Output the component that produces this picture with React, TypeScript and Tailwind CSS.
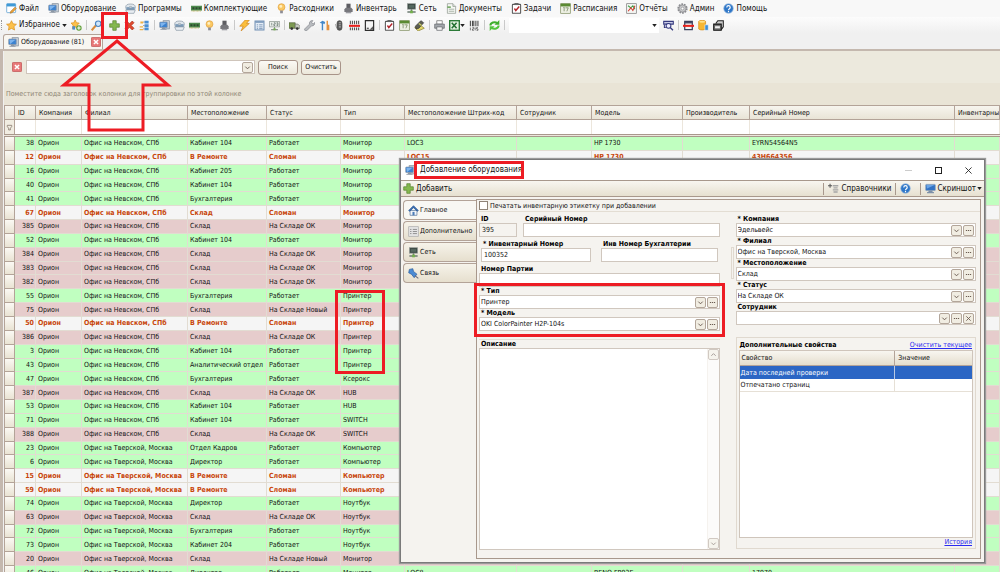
import type { ReactNode } from "react";

const monitor = (
  <>
    <rect x="6" y="1" width="9" height="12" fill="#c9d0d8" stroke="#7f8b98" />
    <rect x="1" y="3" width="11" height="8" rx="1" fill="#3b82d0" stroke="#8795a5" />
    <path d="M2 4h9L3 10z" fill="#7db4ee" />
    <path d="M4 11h5v2h2v1H2v-1h2z" fill="#8d98a5" />
  </>
);

const task = (
  <>
    <rect x="2" y="2" width="12" height="13" rx="1" fill="#fff" stroke="#555" strokeWidth="1.5" />
    <rect x="5" y="0" width="6" height="3" fill="#666" />
    <path d="M5 8l2 3 5-6" fill="none" stroke="#b2232a" strokeWidth="2" />
  </>
);

const calendar = (
  <>
    <rect x="1" y="1" width="14" height="14" fill="#eef0e4" stroke="#7c8a5a" />
    <rect x="1" y="1" width="14" height="4" fill="#5b8a32" />
    <path d="M5 7l1-1v6M8 7h4l-2 5" fill="none" stroke="#64784a" />
  </>
);

const paths: Record<string, ReactNode> = {
  monitor,
  task,
  calendar,
  file: (
    <>
      <rect x="1" y="1" width="13" height="13" rx="1" fill="#fff" stroke="#4a94cc" />
      <rect x="1" y="1" width="13" height="4" fill="#3f9ad6" />
      <path d="M7 12l6-6 2 2-6 6-3 1z" fill="#e8a23c" stroke="#a5661c" strokeWidth=".7" />
    </>
  ),
  disc: (
    <>
      <ellipse cx="8" cy="6" rx="7" ry="4.500" fill="#dfe6ec" stroke="#8996a3" />
      <rect x="2" y="6" width="12" height="5" fill="#7c9bb8" />
      <path d="M1 10h14l-2 5H3z" fill="#e8edf2" stroke="#8996a3" />
      <ellipse cx="8" cy="6" rx="2" ry="1" fill="#fff" stroke="#8996a3" />
    </>
  ),
  ram: (
    <>
      <rect x="0" y="4" width="16" height="7" fill="#4e8a4e" />
      <path d="M2 6h3v3H2zM6.500 6h3v3h-3zM11 6h3v3h-3z" fill="#2d4a2d" />
      <path d="M1 11.500h14" stroke="#b9a544" strokeWidth="1.500" strokeDasharray="1 1" />
    </>
  ),
  bulb: (
    <>
      <circle cx="8" cy="6" r="5" fill="#fbc964" stroke="#e0a03e" />
      <circle cx="7" cy="5" r="2" fill="#fff0c2" />
      <path d="M6 11h4v4H6z" fill="#8d8d95" />
    </>
  ),
  device: (
    <>
      <path d="M5 1h6v7H5z" fill="#5d5d62" />
      <path d="M2 9l2-2h8l2 2v4H2z" fill="#77777c" />
      <path d="M4 13h8v2H4z" fill="#9a9aa0" />
    </>
  ),
  net: (
    <>
      <rect x="2" y="1" width="12" height="8" fill="#3d4a45" stroke="#9aa09c" />
      <path d="M4 3h8v4H4z" fill="#55685f" />
      <path d="M8 9v3M2 13h12" stroke="#6b7a70" strokeWidth="2" />
      <rect x="6" y="11" width="4" height="4" fill="#74b04c" />
    </>
  ),
  docs: (
    <>
      <path d="M2 1h8l4 4v10H2z" fill="#f6f8f4" stroke="#8b938a" />
      <path d="M10 1v4h4" fill="#dfe5dc" stroke="#8b938a" />
      <path d="M2 6h5" stroke="#5c9a49" strokeWidth="2" />
      <path d="M4 9h8M4 12h8" stroke="#9aa69a" strokeWidth="1.200" />
    </>
  ),
  report: (
    <>
      <rect x="1" y="1" width="14" height="14" fill="#f4f6f3" stroke="#777" />
      <path d="M3 4l4 3 3-3 3 5" fill="none" stroke="#3b9b43" strokeWidth="1.500" />
      <path d="M3 12l4-5 3 4 3-7" fill="none" stroke="#d33b30" strokeWidth="1.500" />
    </>
  ),
  gear: (
    <>
      <circle cx="8" cy="8" r="6" fill="#b9babd" stroke="#8b8c90" strokeWidth="3" strokeDasharray="2.400 1.300" />
      <circle cx="8" cy="8" r="5" fill="#c9cacc" stroke="#919295" />
      <circle cx="8" cy="8" r="2" fill="#fff" stroke="#919295" />
    </>
  ),
  help: (
    <>
      <circle cx="8" cy="8" r="7" fill="#2f77c8" stroke="#a6c2e0" />
      <path d="M5.500 6.500c0-3.500 5-3.500 5 0 0 2-2.500 1.500-2.500 4M8 11.500v2" fill="none" stroke="#fff" strokeWidth="1.700" />
    </>
  ),
  star: <path d="M8 1l2.200 4.600 5 .6-3.700 3.400 1 5L8 12.200 3.500 14.600l1-5L.8 6.200l5-.6z" fill="#fcc14a" stroke="#d98f1f" />,
  starAdd: (
    <>
      <path d="M6 0l2 4 4 .5-3 3 1 5L6 10l-4 2.500 1-5L0 4.500 4 4z" fill="#fcc14a" stroke="#d98f1f" />
      <path d="M2 9h4v5H2z" fill="#4c8bcb" />
      <circle cx="11.500" cy="11.500" r="4" fill="#62a03a" />
      <path d="M11.500 9v5M9 11.500h5" stroke="#fff" strokeWidth="1.500" />
    </>
  ),
  search: (
    <>
      <path d="M1 15l6-7" stroke="#d98c3b" strokeWidth="3" />
      <circle cx="10.500" cy="5.500" r="4" fill="#cfe6fb" stroke="#4b86c2" strokeWidth="1.700" />
    </>
  ),
  plus: <path d="M5.500 1h5v4.500H15v5h-4.500V15h-5v-4.500H1v-5h4.500z" fill="#85b84f" stroke="#54802d" />,
  remove: <path d="M1.500 4L4 1.500l4 4 4-4L14.500 4l-4 4 4 4-2.500 2.500-4-4-4 4L1.500 12l4-4z" fill="#e0492e" stroke="#a82c18" />,
  list: (
    <>
      <path d="M1 9h5v2H1zM1 13h5v2H1zM2 2h4v3H2z" fill="#f0b244" />
      <path d="M8 1h6v4H8zM8 6h6v4H8zM8 11h6v4H8z" fill="#4a90d4" />
      <path d="M6 3h2M6 8h2M6 13h2" stroke="#777" />
    </>
  ),
  bolt: <path d="M9 0h6l-4 5h4L3 16l3-7H1z" fill="#fbbe3c" stroke="#cf8420" />,
  sheet: (
    <>
      <rect x="1.500" y="1.500" width="13" height="13" fill="#e5edf6" stroke="#6f8fb4" strokeWidth="1.500" />
      <path d="M2 3h12" stroke="#6f8fb4" strokeWidth="2" />
      <path d="M4 7h2M4 10h2M4 12.500h2M7.500 7h5M7.500 10h5M7.500 12.500h5" stroke="#5b7ba2" />
    </>
  ),
  netId: (
    <>
      <rect x="1" y="2" width="14" height="8" fill="#eef2ee" stroke="#8a948d" />
      <path d="M4 4v4M7 4h2v2H7v2h2M11 4h2v4h-2M11 6h2" fill="none" stroke="#5b6b62" />
      <path d="M8 10v3M3 14h10" stroke="#8a948d" strokeWidth="1.500" />
      <rect x="6.500" y="12" width="3" height="3" fill="#74b04c" />
    </>
  ),
  truck: (
    <>
      <path d="M0 4h9v8H0z" fill="#7d9a52" stroke="#56633f" />
      <path d="M9 6h4l3 3v3H9z" fill="#c6c9c0" stroke="#6e7268" />
      <circle cx="4" cy="12.500" r="2" fill="#333" />
      <circle cx="12" cy="12.500" r="2" fill="#333" />
    </>
  ),
  wrench: <path d="M1 13l7-7c-1-3 2-6 5-5l-2 2 1 2 2 .5 1.500-2c1 3-2 5.500-4.500 5l-7 7c-2 1-4-1-3-2.500z" fill="#b9bcc0" stroke="#85888d" />,
  tools: (
    <>
      <path d="M1 4l4-3 4 2-1 3-2-1v10H4V5z" fill="#4588c9" />
      <path d="M11 1h2v6h2v8h-4V7z" fill="#e5913d" />
    </>
  ),
  traffic: (
    <>
      <rect x="4.500" y="1" width="7" height="14" rx="3.500" fill="#595959" stroke="#3d3d3d" />
      <path d="M7 4h3M7 7h3M7 10h3" stroke="#aaa" strokeWidth="1.500" />
      <path d="M4 12L2 6" stroke="#888" />
    </>
  ),
  barScan: (
    <>
      <path d="M2 1v5M5 1v5M8 1v5M11 1v5M14 1v5M2 11v4M5 11v4M8 11v4M11 11v4M14 11v4" stroke="#555" strokeWidth="1.600" />
      <path d="M0 8.500h16" stroke="#e8201c" strokeWidth="3" />
    </>
  ),
  docScan: (
    <>
      <path d="M2 1h12v14H2z" fill="#f5f5f5" stroke="#2e2e2e" strokeWidth="1.700" />
      <path d="M8 14l5-5v5z" fill="#555" />
      <path d="M4 12h3" stroke="#333" strokeWidth="1.500" />
    </>
  ),
  edit: (
    <>
      <path d="M1 11l9-3 5 4-9 4z" fill="#e2d76a" stroke="#877d36" />
      <path d="M2 9l8-8 4 3-7 8-4 1z" fill="#5d5f52" stroke="#333" />
      <path d="M7 5l4 3" stroke="#c9cc62" strokeWidth="2" />
    </>
  ),
  printer: (
    <>
      <path d="M4 1h8v5H4z" fill="#fff" stroke="#666" />
      <path d="M1 6h14v6H1z" fill="#a4a8ad" stroke="#5d6166" />
      <path d="M4 10h8v5H4z" fill="#f3f3f3" stroke="#5d6166" />
    </>
  ),
  excel: (
    <>
      <rect x="1" y="1" width="14" height="14" fill="#e3f1e0" stroke="#2b7a38" strokeWidth="2" />
      <path d="M4 4l7 8M11 4l-7 8" stroke="#227031" strokeWidth="2.200" />
    </>
  ),
  barcode: (
    <>
      <path d="M2 1v8M5 1v8M7 1v8M10 1v8M13 1v8" stroke="#444" strokeWidth="1.500" />
      <path d="M2 11v4M5 11h2v2H5v2h2M9 11v4M13 11h-2v2h2v2h-2" fill="none" stroke="#444" />
    </>
  ),
  refresh: (
    <>
      <path d="M2 8a6 5 0 0 1 10-3.500" fill="none" stroke="#3fae2c" strokeWidth="3" />
      <path d="M15 0v7H8z" fill="#3fae2c" />
      <path d="M14 8a6 5 0 0 1-10 3.500" fill="none" stroke="#52c43c" strokeWidth="3" />
      <path d="M1 16V9h7z" fill="#52c43c" />
    </>
  ),
  findScan: (
    <>
      <path d="M1 2h14v4H1z" fill="#c8cbe6" stroke="#34397e" strokeWidth="1.500" />
      <circle cx="8" cy="8.500" r="3.500" fill="#eef" stroke="#34397e" strokeWidth="1.500" />
      <path d="M10.500 11l4 4" stroke="#34397e" strokeWidth="2" />
      <path d="M2 7v4h2" fill="none" stroke="#34397e" strokeWidth="1.500" />
    </>
  ),
  boxScan: (
    <>
      <rect x="2.500" y="2" width="11" height="12" fill="#f3f3f3" stroke="#3a3f5c" strokeWidth="1.800" />
      <path d="M3 4h10" stroke="#3a3f5c" strokeWidth="2" />
      <path d="M0 8.500h16" stroke="#e8201c" strokeWidth="3" />
    </>
  ),
  base: (
    <>
      <path d="M1 2c2-2 8-2 10 0v11c-2 2-8 2-10 0z" fill="#f7b733" stroke="#d68a16" />
      <ellipse cx="6" cy="2.500" rx="4.500" ry="1.500" fill="#ffe08a" />
      <path d="M10 7h5v8h-5z" fill="#3e8ed6" stroke="#fff" strokeWidth=".8" />
    </>
  ),
  blackPrinter: (
    <>
      <path d="M4 5l3-4h8v9l-3 4" fill="#ccc" stroke="#222" strokeWidth="1.500" />
      <path d="M1 6h11v9H1z" fill="#777" stroke="#111" strokeWidth="1.500" />
      <path d="M3 9h7v3H3z" fill="#eee" />
    </>
  ),
  home: (
    <>
      <path d="M3 8h10v7H3z" fill="#f3f6fa" stroke="#53739c" />
      <path d="M8 1l7 7-1.500 1L8 4 2.500 9 1 8z" fill="#3870b8" stroke="#27528c" />
      <path d="M6.500 10h3v5h-3z" fill="#4b7cb8" />
    </>
  ),
  form: (
    <>
      <rect x="1" y="1" width="14" height="14" fill="#e4e4e4" stroke="#aaa" />
      <path d="M3 5h2M3 8h2M3 11h2M7 5h6M7 8h6M7 11h6" stroke="#888" strokeWidth="1.300" />
    </>
  ),
  pin: (
    <>
      <path d="M2 2l5-1 1 4 5 4-4 5-4-5-4-2z" fill="#4b8bd4" stroke="#2a5c9c" />
      <path d="M10 11l5 4" stroke="#667" strokeWidth="1.500" />
    </>
  ),
  refs: (
    <>
      <path d="M3 1v6M0 4h6" stroke="#555" strokeWidth="1.500" />
      <path d="M7 4h8M8 7h6M7 10h8M8 13h6" stroke="#a5a5a5" strokeWidth="2" />
    </>
  ),
  screen: (
    <>
      <rect x="1" y="2" width="14" height="9" rx="1" fill="#3373c4" stroke="#8ba0b8" />
      <path d="M2 3h12L3 8z" fill="#6ba4e6" />
      <path d="M5 11h6v2h2v2H3v-2h2z" fill="#7d90a8" />
    </>
  ),
};

const Icon = ({ name }: { name: string }) => (
  <svg viewBox="0 0 16 16" className="h-[11px] w-[11px] shrink-0" aria-hidden="true">
    {paths[name]}
  </svg>
);

const Caret = () => (
  <svg viewBox="0 0 6 4" className="h-[3px] w-[5px] shrink-0" aria-hidden="true">
    <path d="M0 0h6L3 4z" fill="#222" />
  </svg>
);

const menu = [
  ["file", "Файл"],
  ["monitor", "Оборудование"],
  ["disc", "Программы"],
  ["ram", "Комплектующие"],
  ["bulb", "Расходники"],
  ["device", "Инвентарь"],
  ["net", "Сеть"],
  ["docs", "Документы"],
  ["task", "Задачи"],
  ["calendar", "Расписания"],
  ["report", "Отчёты"],
  ["gear", "Админ"],
  ["help", "Помощь"],
];

const MenuBar = () => (
  <nav className="flex h-[17px] shrink-0 items-center gap-[9px] bg-[#f8f8f8] pl-[6px] text-[8px] leading-[10px]">
    {menu.map(([icon, label]) => (
      <button key={label} type="button" className="flex shrink-0 items-center gap-[2px]">
        <Icon name={icon} />
        {label}
      </button>
    ))}
  </nav>
);

const Sep = () => <span className="h-[10px] w-px shrink-0 bg-[#c9c9c9]" />;

const toolGroups = [
  ["monitor", "disc", "ram", "bulb", "device"],
  ["bolt", "sheet", "netId"],
  ["truck", "wrench", "tools", "traffic", "barScan", "docScan"],
  ["task", "calendar", "edit"],
];

const ToolButton = ({ icon }: { icon: string }) => (
  <button type="button" aria-label={icon} className="flex shrink-0 items-center">
    <Icon name={icon} />
  </button>
);

const ToolBar = () => (
  <div className="flex h-4 shrink-0 items-center gap-1 bg-gradient-to-b from-[#fcfcfc] to-[#f0f0f0] pl-[1px] text-[8px] leading-[10px]">
    <span className="h-[10px] w-px shrink-0 border-l border-dotted border-[#999]" />
    <button type="button" className="flex shrink-0 items-center gap-[2px]">
      <Icon name="star" />
      Избранное
      <Caret />
    </button>
    <ToolButton icon="starAdd" />
    <Sep />
    <ToolButton icon="search" />
    <span className="relative ml-[3px] flex shrink-0">
      <ToolButton icon="plus" />
      <span className="absolute -inset-2 border-[3px] border-[#ed1c24]" />
    </span>
    <ToolButton icon="remove" />
    <ToolButton icon="list" />
    {toolGroups.map((group) => (
      <div key={group[0]} className="flex shrink-0 items-center gap-1">
        <Sep />
        {group.map((icon) => (
          <ToolButton key={icon} icon={icon} />
        ))}
      </div>
    ))}
    <Sep />
    <ToolButton icon="printer" />
    <button type="button" aria-label="Excel" className="flex shrink-0 items-center">
      <Icon name="excel" />
      <Caret />
    </button>
    <ToolButton icon="barcode" />
    <Sep />
    <ToolButton icon="refresh" />
    <Sep />
    <div className="flex h-[15px] w-[150px] shrink-0 items-center bg-white pr-[2px]">
      <input aria-label="Быстрый поиск" className="h-full min-w-0 flex-1 bg-white outline-none" />
      <Caret />
    </div>
    <ToolButton icon="findScan" />
    <Sep />
    <ToolButton icon="boxScan" />
    <ToolButton icon="base" />
    <ToolButton icon="blackPrinter" />
  </div>
);

const CloseX = () => (
  <svg viewBox="0 0 12 12" className="h-[10px] w-[10px] shrink-0" aria-hidden="true">
    <rect x=".5" y=".5" width="11" height="11" rx="1" fill="#e87878" stroke="#c25a5a" />
    <path d="M3.500 3.500l5 5M8.500 3.500l-5 5" stroke="#fff" strokeWidth="1.800" />
  </svg>
);

const Chevron = ({ up }: { up?: boolean }) => (
  <svg viewBox="0 0 8 8" className="h-[7px] w-[7px]" aria-hidden="true">
    <path d={up ? "M1.500 5.500L4 3l2.500 2.500" : "M1.500 3L4 5.500 6.500 3"} fill="none" stroke="#6b5d52" strokeWidth="1.100" />
  </svg>
);

const SmallButton = ({ label, children }: { label: string; children: ReactNode }) => (
  <button
    type="button"
    aria-label={label}
    className="flex h-[11px] w-[11px] shrink-0 items-center justify-center rounded-[2px] border border-[#b3a69a] bg-[#f1ede2]"
  >
    {children}
  </button>
);

const Dots = () => (
  <svg viewBox="0 0 8 8" className="h-[7px] w-[7px]" aria-hidden="true">
    <path d="M1 4h1.400M3.300 4h1.400M5.600 4H7" stroke="#6b5d52" strokeWidth="1.300" />
  </svg>
);

const SearchBar = () => (
  <div className="flex h-8 shrink-0 items-center gap-[3px] bg-[#ece9dd] pl-[8px]">
    <button type="button" aria-label="Закрыть поиск" className="flex">
      <CloseX />
    </button>
    <div className="ml-px flex h-[14px] w-[229px] items-center border border-[#cfc5bb] bg-white pr-px">
      <input aria-label="Строка поиска" className="h-full min-w-0 flex-1 outline-none" />
      <SmallButton label="Открыть список">
        <Chevron />
      </SmallButton>
    </div>
    <button type="button" className="h-[15px] w-10 rounded-[3px] border border-[#a89489] bg-gradient-to-b from-[#fbfaf5] to-[#ece7da]">
      Поиск
    </button>
    <button type="button" className="h-[15px] w-[40px] rounded-[3px] border border-[#a89489] bg-gradient-to-b from-[#fbfaf5] to-[#ece7da]">
      Очистить
    </button>
  </div>
);

const columns = [
  "ID",
  "Компания",
  "Филиал",
  "Местоположение",
  "Статус",
  "Тип",
  "Местоположение Штрих-код",
  "Сотрудник",
  "Модель",
  "Производитель",
  "Серийный Номер",
  "Инвентарный Номер",
];

const spb = "Офис на Невском, СПб";
const msk = "Офис на Тверской, Москва";

const rows: string[][] = [
  ["38", spb, "Кабинет 104", "Работает", "Монитор", "LOC3", "HP 1730", "EYRN54564N5"],
  ["12", spb, "В Ремонте", "Сломан", "Монитор", "LOC15", "HP 1730", "43H664356"],
  ["16", spb, "Кабинет 205", "Работает", "Монитор"],
  ["40", spb, "Кабинет 104", "Работает", "Монитор"],
  ["41", spb, "Бухгалтерия", "Работает", "Монитор"],
  ["67", spb, "Склад", "Сломан", "Монитор"],
  ["385", spb, "Склад", "На Складе ОК", "Монитор"],
  ["52", spb, "Кабинет 104", "Работает", "Монитор"],
  ["384", spb, "Склад", "На Складе ОК", "Монитор"],
  ["383", spb, "Склад", "На Складе ОК", "Монитор"],
  ["382", spb, "Склад", "На Складе ОК", "Монитор"],
  ["55", spb, "Бухгалтерия", "Работает", "Принтер"],
  ["75", spb, "Склад", "На Складе Новый", "Принтер"],
  ["50", spb, "В Ремонте", "Сломан", "Принтер"],
  ["386", spb, "Склад", "На Складе ОК", "Принтер"],
  ["3", spb, "Кабинет 104", "Работает", "Принтер"],
  ["43", spb, "Аналитический отдел", "Работает", "Принтер"],
  ["47", spb, "Бухгалтерия", "Работает", "Ксерокс"],
  ["387", spb, "Склад", "На Складе ОК", "HUB"],
  ["53", spb, "Кабинет 104", "Работает", "HUB"],
  ["71", spb, "Кабинет 104", "Работает", "SWITCH"],
  ["388", spb, "Склад", "На Складе ОК", "SWITCH"],
  ["23", msk, "Отдел Кадров", "Работает", "Компьютер"],
  ["6", msk, "Директор", "Работает", "Компьютер"],
  ["15", msk, "В Ремонте", "Сломан", "Компьютер"],
  ["59", msk, "В Ремонте", "Сломан", "Компьютер"],
  ["74", msk, "Директор", "Работает", "Ноутбук"],
  ["63", msk, "Склад", "На Складе ОК", "Ноутбук"],
  ["72", msk, "Бухгалтерия", "Работает", "Ноутбук"],
  ["73", msk, "Кабинет 204", "Работает", "Ноутбук"],
  ["20", msk, "Склад", "На Складе Новый", "Монитор"],
  ["46", msk, "Директор", "Работает", "Монитор", "LOC8", "BENQ FP93E", "17970"],
];

const rowStyle = (status: string) => {
  if (status === "Работает") return "bg-[#c0ffc0]";
  if (status === "Сломан") return "bg-[#f5f5f5] font-bold text-[#c8460a]";
  return "bg-[#e6cccc]";
};

const EquipmentTable = () => (
  <table className="h-[475px] w-full table-fixed border-separate border-spacing-0 bg-white leading-[10px]">
    <colgroup>
      <col className="w-[11px]" />
      <col className="w-[21px]" />
      <col className="w-[46px]" />
      <col className="w-[106px]" />
      <col className="w-[79px]" />
      <col className="w-[74px]" />
      <col className="w-[64px]" />
      <col className="w-[112px]" />
      <col className="w-[75px]" />
      <col className="w-[91px]" />
      <col className="w-[67px]" />
      <col className="w-[205px]" />
      <col />
    </colgroup>
    <thead>
      <tr className="h-[15px] bg-gradient-to-b from-[#f8f6f0] to-[#e8e3d5]">
        <th className="border border-[#b3a398] p-0" />
        {columns.map((name) => (
          <th
            key={name}
            className="overflow-hidden border-y border-r border-[#b3a398] p-0 pl-[3px] text-left font-normal whitespace-nowrap"
          >
            {name}
          </th>
        ))}
      </tr>
      <tr className="h-[14px]">
        <td className="border-x border-[#b3a398] bg-[#f1ede2] p-0">
          <svg viewBox="0 0 8 8" className="mx-auto h-[7px] w-[7px]" aria-hidden="true">
            <path d="M1.500 1.500h5v1.500L5 4.800v2H3v-2L1.500 3z" fill="none" stroke="#84776b" strokeWidth=".9" />
          </svg>
        </td>
        {columns.map((name) => (
          <td key={name} className="border-r border-[#ece6dc] p-0" />
        ))}
      </tr>
      <tr className="h-[3px]">
        <td colSpan={13} className="h-[3px] border-y border-[#a8988c] bg-[#ece6dc] p-0" />
      </tr>
    </thead>
    <tbody>
      {rows.map(([id, branch, place, status, type, code, model, serial]) => (
        <tr key={id} className={rowStyle(status)}>
          <td className="border border-t-0 border-[#b3a398] bg-gradient-to-b from-[#fbf9f4] to-[#e9e3d3] p-0" />
          <td className="border-r border-b border-[#e2dcd2] p-0 pr-px text-right">{id}</td>
          {["Орион", branch, place, status, type, code, "", model, "", serial, ""].map((text, i) => (
            <td key={i} className="overflow-hidden border-r border-b border-[#e2dcd2] p-0 pl-[2px] whitespace-nowrap">
              {text}
            </td>
          ))}
        </tr>
      ))}
    </tbody>
  </table>
);

const inputStyle = "h-[14px] w-full border border-[#d0c7be] px-[2px] outline-none";

type FieldProps = { id: string; label: string; value?: string; className?: string; disabled?: boolean };

const TextField = ({ id, label, value = "", className = "", disabled }: FieldProps) => (
  <div className={`flex flex-col ${className}`}>
    <label htmlFor={id} className="pl-[2px] font-bold whitespace-nowrap text-black">
      {label}
    </label>
    <input id={id} defaultValue={value} readOnly={disabled} className={`${inputStyle} ${disabled ? "bg-[#f5f3ef]" : "bg-white"}`} />
  </div>
);

const SelectField = ({ id, label, value = "", clear }: FieldProps & { clear?: boolean }) => (
  <div className="flex flex-col">
    <label htmlFor={id} className="pl-[2px] font-bold whitespace-nowrap text-black">
      {label}
    </label>
    <div className="flex h-[14px] items-center gap-px border border-[#d0c7be] bg-white pr-px">
      <select id={id} defaultValue={value} className="h-full min-w-0 flex-1 appearance-none bg-white pl-px outline-none">
        <option>{value}</option>
      </select>
      <SmallButton label="Открыть список">
        <Chevron />
      </SmallButton>
      <SmallButton label="Выбрать">
        <Dots />
      </SmallButton>
      {clear && (
        <SmallButton label="Очистить">
          <svg viewBox="0 0 8 8" className="h-[7px] w-[7px]" aria-hidden="true">
            <path d="M1.500 1.500l5 5M6.500 1.500l-5 5" stroke="#6b5d52" />
          </svg>
        </SmallButton>
      )}
    </div>
  </div>
);

const tabs = [
  ["home", "Главное"],
  ["form", "Дополнительно"],
  ["net", "Сеть"],
  ["pin", "Связь"],
];

const DialogTabs = () => (
  <div role="tablist" className="flex w-[73px] shrink-0 flex-col gap-px pt-[3px]">
    {tabs.map(([icon, label], i) => (
      <button
        key={label}
        type="button"
        role="tab"
        aria-selected={i === 0}
        className={`flex h-5 items-center gap-px rounded-l-[4px] border border-r-0 border-[#b3a398] pl-[4px] ${
          i === 0 ? "bg-[#f8f7f3]" : "bg-gradient-to-b from-[#f6f3ea] to-[#e6dfce]"
        }`}
      >
        <Icon name={icon} />
        {label}
      </button>
    ))}
  </div>
);

const Description = () => (
  <div className="flex min-h-0 flex-1 flex-col">
    <label htmlFor="description" className="pl-[2px] font-bold text-black">
      Описание
    </label>
    <div className="flex flex-1 border border-[#d0c7be] bg-white">
      <textarea id="description" className="min-w-0 flex-1 resize-none outline-none" />
      <div className="flex w-3 flex-col justify-between border-l border-[#efebe4] bg-[#fbfaf8] opacity-60">
        <SmallButton label="Вверх">
          <Chevron up />
        </SmallButton>
        <SmallButton label="Вниз">
          <Chevron />
        </SmallButton>
      </div>
    </div>
  </div>
);

const Properties = () => (
  <div className="flex min-h-0 flex-1 flex-col border border-[#e0d9cf] p-[2px] pb-0">
    <div className="flex h-[10px] items-center justify-between px-px">
      <span className="font-bold text-black">Дополнительные свойства</span>
      <a href="#clear" className="text-[#2a2af0] underline">
        Очистить текущее
      </a>
    </div>
    <div className="flex-1 border border-[#cfc5bb] bg-white">
      <table className="w-full table-fixed border-separate border-spacing-0">
        <thead>
          <tr className="h-[15px] bg-gradient-to-b from-[#f8f6f0] to-[#e3dccb]">
            <th className="w-[67%] border-r border-b border-[#b3a398] p-0 pl-[2px] text-left font-normal">Свойство</th>
            <th className="border-b border-[#b3a398] p-0 pl-[3px] text-left font-normal">Значение</th>
          </tr>
        </thead>
        <tbody>
          <tr className="h-[13px] bg-[#2b66c4] text-white">
            <td className="border-r border-[#b9c9e4] p-0 pl-px">Дата последней проверки</td>
            <td className="p-0" />
          </tr>
          <tr className="h-[13px]">
            <td className="border-r border-b border-[#e6e0d6] p-0 pl-px">Отпечатано страниц</td>
            <td className="border-b border-[#e6e0d6] p-0" />
          </tr>
        </tbody>
      </table>
    </div>
    <a href="#history" className="h-[10px] self-end pr-px text-[#2a2af0] underline">
      История
    </a>
  </div>
);

const DialogForm = () => (
  <div className="mt-[2px] mr-px mb-[3px] flex min-w-0 flex-1 flex-col border border-[#a8988c] bg-[#f5f3ef]">
    <div className="flex h-3 shrink-0 items-center gap-[2px] border-b border-[#e3ddd3] pl-[2px]">
      <input id="print-label" type="checkbox" className="h-[9px] w-[9px] appearance-none border border-[#8f8478] bg-white" />
      <label htmlFor="print-label">Печатать инвентарную этикетку при добавлении</label>
    </div>
    <div className="flex min-h-0 flex-1 pr-1 pl-[2px]">
      <div className="flex flex-1 flex-col pt-[3px] pb-2">
        <div className="flex gap-[6px]">
          <TextField id="item-id" label="ID" value="395" className="w-[38px]" disabled />
          <TextField id="serial" label="Серийный Номер" className="flex-1" />
        </div>
        <div className="mt-[3px] flex gap-[10px] px-[2px]">
          <TextField id="inventory" label="* Инвентарный Номер" value="100352" className="w-[110px]" />
          <TextField id="accounting" label="Инв Номер Бухгалтерии" className="flex-1" />
        </div>
        <TextField id="batch" label="Номер Партии" className="mt-[3px]" />
        <div className="relative flex flex-col">
          <SelectField id="type" label="* Тип" value="Принтер" />
          <SelectField id="model" label="* Модель" value="OKI ColorPainter H2P-104s" />
          <span className="pointer-events-none absolute -inset-x-[5px] -top-[4px] -bottom-[6px] border-[3px] border-[#ed1c24]" />
        </div>
        <div className="mt-2 flex min-h-0 flex-1 flex-col border-t border-[#e3ddd3]">
          <Description />
        </div>
      </div>
      <div className="flex w-4 shrink-0 justify-end pt-[35px] pr-[2px]">
        <span className="h-8 w-[3px] border border-[#e0d9cf]" />
      </div>
      <div className="flex flex-1 flex-col pt-[3px] pb-[9px]">
        <SelectField id="company" label="* Компания" value="Эдельвейс" />
        <SelectField id="branch" label="* Филиал" value="Офис на Тверской, Москва" />
        <SelectField id="place" label="* Местоположение" value="Склад" />
        <SelectField id="status" label="* Статус" value="На Складе ОК" />
        <SelectField id="person" label="Сотрудник" clear />
        <div className="mt-3 flex min-h-0 flex-1 flex-col">
          <Properties />
        </div>
      </div>
    </div>
  </div>
);

const AddDialog = () => (
  <section
    role="dialog"
    aria-label="Добавление оборудования"
    className="absolute top-[159px] left-[400px] flex h-[404px] w-[585px] flex-col border border-[#7a7a7a] bg-[#f5f3ef] leading-[8px] shadow-[0_0_1px_1px_#9a9a9a]"
  >
    <header className="flex h-5 shrink-0 items-center justify-between bg-white pr-[12px] pl-[4px] text-[8px] leading-[10px]">
      <div className="flex items-center">
        <Icon name="monitor" />
        <h1 className="relative pl-1">
          Добавление оборудования
          <span className="absolute -inset-x-[2px] -inset-y-[4px] border-[3px] border-[#ed1c24]" />
        </h1>
      </div>
      <div className="flex items-center gap-[23px]">
        <button type="button" aria-label="Свернуть" className="h-px w-[7px] bg-[#ccc]" />
        <button type="button" aria-label="Развернуть" className="h-[7px] w-[7px] border border-[#222]" />
        <button type="button" aria-label="Закрыть">
          <svg viewBox="0 0 8 8" className="h-[7px] w-[7px]" aria-hidden="true">
            <path d="M.5.5l7 7M7.500.5l-7 7" stroke="#222" />
          </svg>
        </button>
      </div>
    </header>
    <div className="flex h-[17px] shrink-0 items-center justify-between border-y border-[#a8988c] bg-gradient-to-b from-[#f8f6f0] to-[#e6e0d0] px-[2px] text-[8px] leading-[10px]">
      <button type="button" className="flex items-center gap-[2px]">
        <Icon name="plus" />
        Добавить
      </button>
      <div className="flex items-center gap-[4px]">
        <span className="h-3 w-px bg-[#a8988c]" />
        <button type="button" className="flex items-center gap-[2px]">
          <Icon name="refs" />
          Справочники
        </button>
        <span className="h-3 w-px bg-[#a8988c]" />
        <button type="button" aria-label="Справка" className="mr-[5px] flex">
          <Icon name="help" />
        </button>
        <span className="h-3 w-px bg-[#a8988c]" />
        <button type="button" className="flex items-center gap-px">
          <Icon name="screen" />
          Скриншот
          <Caret />
        </button>
      </div>
    </div>
    <div className="flex min-h-0 flex-1 px-[2px]">
      <DialogTabs />
      <DialogForm />
    </div>
  </section>
);

export default function App() {
  return (
    <div className="relative flex h-screen flex-col overflow-hidden bg-[#f0f0f0] font-['DejaVu_Sans_Condensed','DejaVu_Sans',sans-serif] text-[7px] leading-[10px] text-[#111]">
      <MenuBar />
      <ToolBar />
      <div className="flex h-4 shrink-0 items-end bg-[#f0f0f0] pl-[3px]">
        <div role="tab" className="flex h-[15px] items-center gap-[2px] rounded-t-[3px] border border-b-0 border-[#b3a398] bg-[#f8f6f1] pr-px pl-[4px]">
          <Icon name="monitor" />
          <span className="pr-[5px]">Оборудование (81)</span>
          <button type="button" aria-label="Закрыть вкладку" className="flex">
            <CloseX />
          </button>
        </div>
      </div>
      <main className="flex min-h-0 flex-1 flex-col border-t-2 border-l-[3px] border-[#c4b8ae] pl-px">
        <SearchBar />
        <p className="h-[22px] shrink-0 bg-[#e9e4d6] pt-[6px] pl-[2px] text-[#8f8675]">
          Поместите сюда заголовок колонки для группировки по этой колонке
        </p>
        <div className="min-h-0 flex-1 overflow-hidden">
          <EquipmentTable />
        </div>
      </main>

      <svg viewBox="0 0 112 94" className="pointer-events-none absolute top-[38px] left-[60px] h-[94px] w-[112px]" aria-hidden="true">
        <path d="M57 3l51 44H83v45H29V47H4z" fill="none" stroke="#ed1c24" strokeWidth="3" />
      </svg>
      <span className="pointer-events-none absolute top-[290px] left-[335px] h-[84px] w-[50px] border-[3px] border-[#ed1c24]" />

      <AddDialog />
    </div>
  );
}
